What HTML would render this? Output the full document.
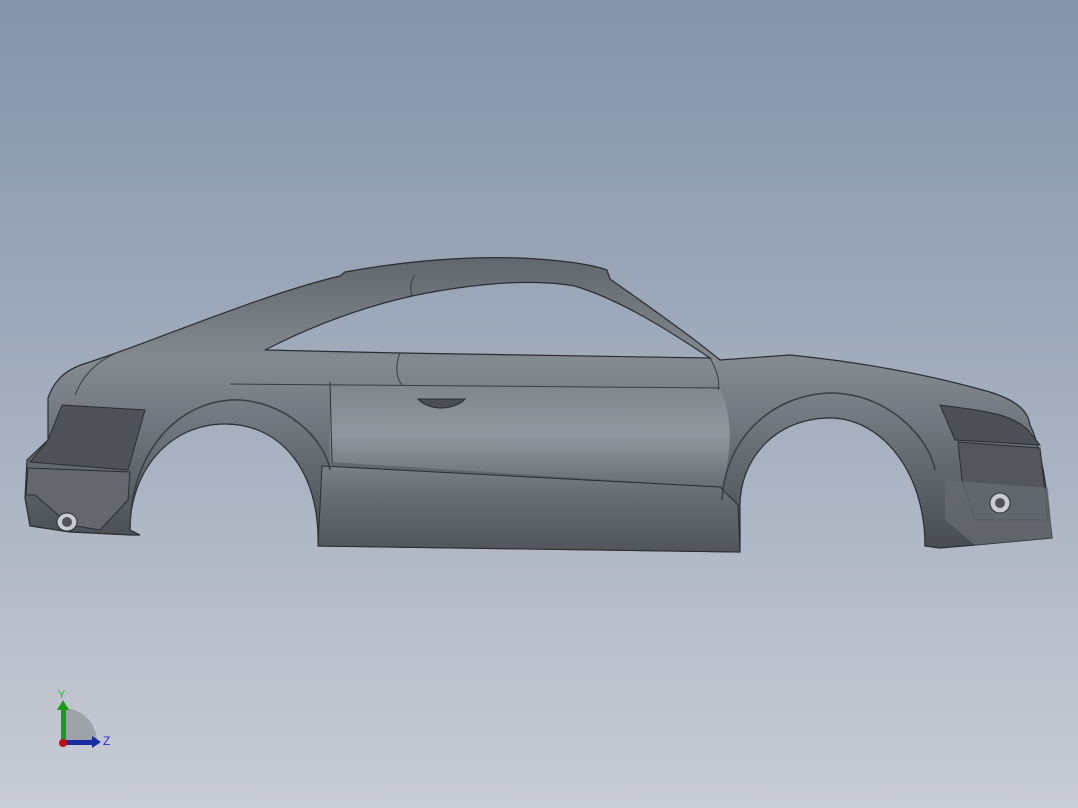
<!DOCTYPE html>
<html><head><style>
html,body{margin:0;padding:0;width:1078px;height:808px;overflow:hidden}
svg{display:block}
</style></head><body>
<svg width="1078" height="808" viewBox="0 0 1078 808" xmlns="http://www.w3.org/2000/svg">
<defs>
<linearGradient id="bg" x1="0" y1="0" x2="0" y2="808" gradientUnits="userSpaceOnUse">
<stop offset="0" stop-color="#8494aa"/>
<stop offset="0.5" stop-color="#a4aebe"/>
<stop offset="1" stop-color="#c9ccd5"/>
</linearGradient>
<linearGradient id="body" x1="0" y1="260" x2="0" y2="550" gradientUnits="userSpaceOnUse">
<stop offset="0" stop-color="#62676e"/>
<stop offset="0.35" stop-color="#858a91"/>
<stop offset="0.55" stop-color="#737880"/>
<stop offset="0.8" stop-color="#5a5f65"/>
<stop offset="1" stop-color="#484c52"/>
</linearGradient>
<linearGradient id="side" x1="0" y1="380" x2="0" y2="490" gradientUnits="userSpaceOnUse">
<stop offset="0" stop-color="#7f848b"/>
<stop offset="0.5" stop-color="#9aa0a7"/>
<stop offset="1" stop-color="#6a6f76"/>
</linearGradient>
<linearGradient id="rock" x1="0" y1="466" x2="0" y2="550" gradientUnits="userSpaceOnUse">
<stop offset="0" stop-color="#7c8188"/>
<stop offset="0.3" stop-color="#6a6f75"/>
<stop offset="1" stop-color="#52565c"/>
</linearGradient>
</defs>
<rect width="1078" height="808" fill="url(#bg)"/>
<path d="M48,398 C55,378 68,368 90,362 L130,348 C200,322 280,290 340,276 L345,272 C400,262 460,256 520,258 C560,260 590,264 607,270 L610,279 C640,300 690,335 720,360 L790,355 C860,362 930,375 990,392 C1015,400 1028,410 1030,425 C1040,445 1046,480 1050,520 L1052,538 L975,545 L940,548 L925,546 C925,470 880,418 830,418 C775,418 738,460 740,510 L740,552 L318,546 C320,470 280,424 225,424 C170,424 130,470 130,530 L140,535 L130,535 L70,532 L30,526 L25,498 L27,460 L48,440 Z" fill="url(#body)" stroke="#2a2d31" stroke-width="1.2"/>
<path d="M330,385 L720,388 C735,420 730,460 722,487 L330,462 Z" fill="url(#side)" opacity="0.8"/>
<path d="M322,466 L720,487 L738,505 L740,552 L318,546 Z" fill="url(#rock)" stroke="#2a2d31" stroke-width="1"/>
<path d="M265,350 C300,332 350,310 412,296 C470,284 530,278 575,286 C620,300 665,328 710,358 L400,353 Z" fill="url(#bg)" stroke="#2a2d31" stroke-width="1.2"/>
<path d="M62,405 L145,410 L128,470 L30,462 L48,440 Z" fill="#4f5359" stroke="#2a2d31" stroke-width="1"/>
<path d="M28,468 L130,472 L128,500 L100,530 L70,525 L35,495 L26,495 Z" fill="#64686e" stroke="#2a2d31" stroke-width="1"/>
<path d="M940,405 C975,410 1010,412 1028,430 L1040,445 L955,440 Z" fill="#4d5157" stroke="#2a2d31" stroke-width="1"/>
<path d="M958,442 L1040,448 L1048,520 L975,520 L962,480 Z" fill="#53575d" stroke="#2a2d31" stroke-width="1"/>
<path d="M945,480 L1048,488 L1052,538 L975,545 L945,520 Z" fill="#6a6e74" opacity="0.7"/>
<path d="M330,382 L332,462" stroke="#2a2d31" fill="none"/>
<path d="M230,384 L720,388" stroke="#3a3d42" fill="none"/>
<path d="M400,353 C395,365 396,378 402,385" stroke="#3a3d42" fill="none"/>
<path d="M710,358 C718,372 720,382 718,390" stroke="#3a3d42" fill="none"/>
<path d="M412,296 C410,288 410,282 415,275" stroke="#3a3d42" fill="none"/>
<path d="M130,348 C105,355 85,370 75,395" stroke="#3a3d42" fill="none"/>
<path d="M130,530 C130,460 170,405 230,400 C285,398 325,440 330,470" stroke="#3a3d42" fill="none" stroke-width="1.5"/>
<path d="M722,500 C725,440 770,395 830,393 C890,393 930,440 935,470" stroke="#3a3d42" fill="none" stroke-width="1.5"/>
<path d="M418,399 L465,399 C455,410 430,412 418,399 Z" fill="#4a4e54" stroke="#2a2d31"/>
<ellipse cx="67" cy="522" rx="10" ry="9" fill="#c8ccd2" stroke="#2a2d31"/>
<ellipse cx="67" cy="522" rx="5" ry="5" fill="#50545a"/>
<ellipse cx="1000" cy="503" rx="10" ry="10" fill="#c8ccd2" stroke="#2a2d31"/>
<ellipse cx="1000" cy="503" rx="5" ry="5" fill="#50545a"/>
<path d="M63,742 L63,708 A34,34 0 0 1 97,742 Z" fill="#9ea2a9"/>
<rect x="61" y="705" width="5" height="37" fill="#1a9a1a"/>
<path d="M57,710 L63,700 L69,710 Z" fill="#1a9a1a"/>
<rect x="63" y="740" width="30" height="5" fill="#1a2aa0"/>
<path d="M92,736 L101,742 L92,748 Z" fill="#1a2aa0"/>
<circle cx="63" cy="743" r="4" fill="#c01010"/>
<text x="58" y="698" font-family="Liberation Sans, sans-serif" font-size="11" fill="#20c020">Y</text>
<text x="103" y="745" font-family="Liberation Sans, sans-serif" font-size="12" fill="#2030d0">Z</text>
</svg>
</body></html>
